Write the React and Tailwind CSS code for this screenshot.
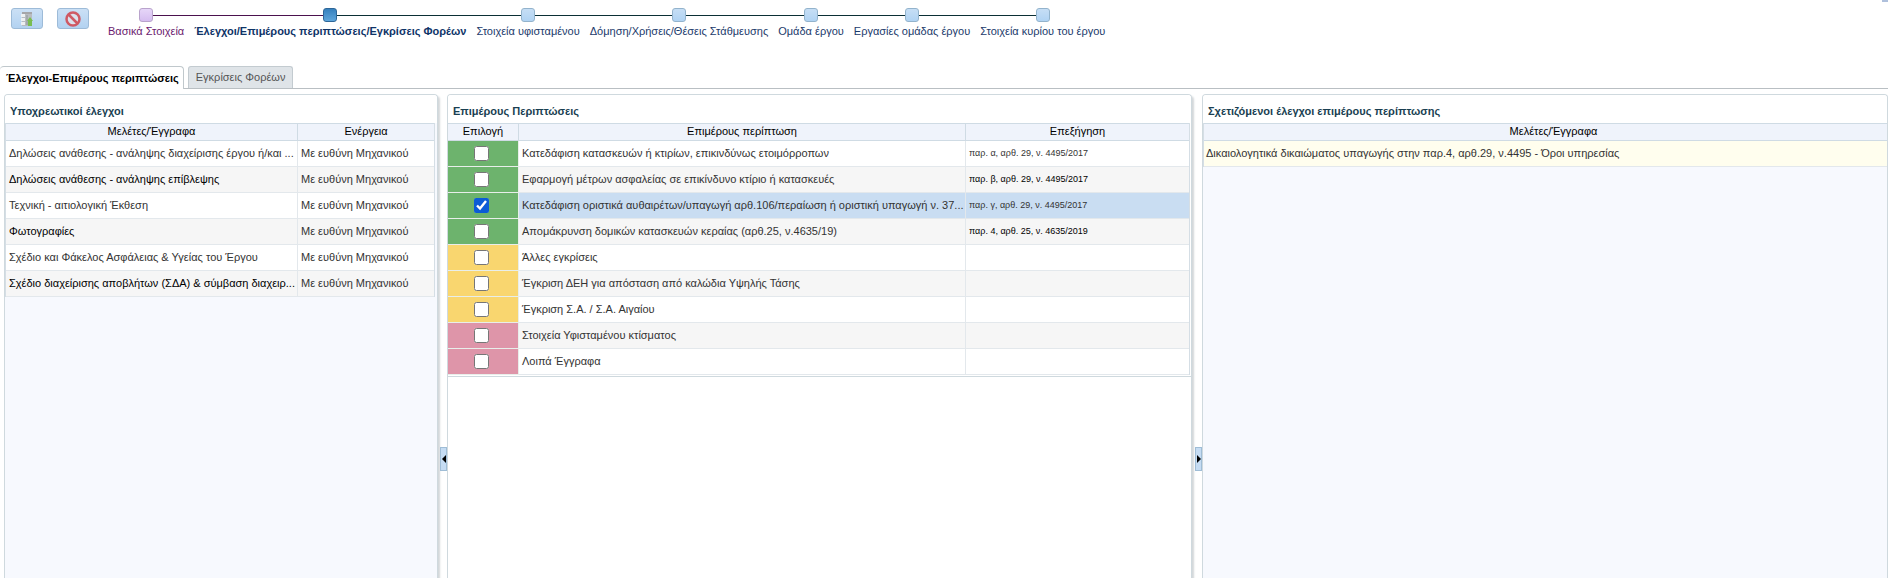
import { useState } from 'react';
import clsx from 'clsx';

const stops = [
  { label: 'Βασικά Στοιχεία', state: 'visited' },
  { label: 'Έλεγχοι/Επιμέρους περιπτώσεις/Εγκρίσεις Φορέων', state: 'current' },
  { label: 'Στοιχεία υφισταμένου', state: 'next' },
  { label: 'Δόμηση/Χρήσεις/Θέσεις Στάθμευσης', state: 'next' },
  { label: 'Ομάδα έργου', state: 'next' },
  { label: 'Εργασίες ομάδας έργου', state: 'next' },
  { label: 'Στοιχεία κυρίου του έργου', state: 'next' },
];

const requiredChecks = [
  'Δηλώσεις ανάθεσης - ανάληψης διαχείρισης έργου ή/και ...',
  'Δηλώσεις ανάθεσης - ανάληψης επίβλεψης',
  'Τεχνική - αιτιολογική Έκθεση',
  'Φωτογραφίες',
  'Σχέδιο και Φάκελος Ασφάλειας & Υγείας του Έργου',
  'Σχέδιο διαχείρισης αποβλήτων (ΣΔΑ) & σύμβαση διαχειρ...',
];

const initialCases = [
  { name: 'Κατεδάφιση κατασκευών ή κτιρίων, επικινδύνως ετοιμόρροπων', note: 'παρ. α, αρθ. 29, ν. 4495/2017', color: 'green' },
  { name: 'Εφαρμογή μέτρων ασφαλείας σε επικίνδυνο κτίριο ή κατασκευές', note: 'παρ. β, αρθ. 29, ν. 4495/2017', color: 'green' },
  { name: 'Κατεδάφιση οριστικά αυθαιρέτων/υπαγωγή αρθ.106/περαίωση ή οριστική υπαγωγή ν. 37...', note: 'παρ. γ, αρθ. 29, ν. 4495/2017', color: 'green', checked: true },
  { name: 'Απομάκρυνση δομικών κατασκευών κεραίας (αρθ.25, ν.4635/19)', note: 'παρ. 4, αρθ. 25, ν. 4635/2019', color: 'green' },
  { name: 'Άλλες εγκρίσεις', note: '', color: 'yellow' },
  { name: 'Έγκριση ΔΕΗ για απόσταση από καλώδια Υψηλής Τάσης', note: '', color: 'yellow' },
  { name: 'Έγκριση Σ.Α. / Σ.Α. Αιγαίου', note: '', color: 'yellow' },
  { name: 'Στοιχεία Υφισταμένου κτίσματος', note: '', color: 'pink' },
  { name: 'Λοιπά Έγγραφα', note: '', color: 'pink' },
];

const cellColors = {
  green: 'bg-[#6db36d]',
  yellow: 'bg-[#f9d66f]',
  pink: 'bg-[#de95a9]',
};

function ToolButton({ label, children }) {
  return (
    <button
      aria-label={label}
      className="flex h-[21px] w-8 items-center justify-center rounded-[3px] border border-[#9dbbd8] bg-gradient-to-b from-[#cbe0f5] to-[#b2d2f1]"
    >
      {children}
    </button>
  );
}

function Train() {
  return (
    <nav className="flex pt-2">
      {stops.map(({ label, state }, i) => (
        <a key={label} href="#" className="flex flex-col items-center">
          <span className="flex w-full items-start">
            <span
              className={clsx(
                'mt-[7px] h-px flex-1',
                i === 0 ? 'bg-transparent' : i === 1 ? 'bg-[#4b124e]' : 'bg-[#0b2f35]'
              )}
            />
            <span
              className={clsx(
                'size-[14px] rounded-[3px] border',
                state === 'visited' && 'border-[#b9a3cc] bg-gradient-to-b from-[#e6d6f8] to-[#d5bdf0]',
                state === 'current' && 'border-[#2d6698] bg-gradient-to-b from-[#3580bd] to-[#5ea6dc]',
                state === 'next' && 'border-[#93b3cc] bg-gradient-to-b from-[#c6def5] to-[#b0d3f3]'
              )}
            />
            <span
              className={clsx(
                'mt-[7px] h-px flex-1',
                i === stops.length - 1 ? 'bg-transparent' : i === 0 ? 'bg-[#4b124e]' : 'bg-[#0b2f35]'
              )}
            />
          </span>
          <span
            className={clsx(
              'px-[5px] pt-px leading-4 whitespace-nowrap',
              state === 'visited' && 'text-[#6b1a6e]',
              state === 'current' && 'font-bold text-[#0f3468]',
              state === 'next' && 'text-[#1b3a6b]'
            )}
          >
            {label}
          </span>
        </a>
      ))}
    </nav>
  );
}

function Panel({ title, tinted, children }) {
  return (
    <section
      className={clsx(
        'min-w-0 overflow-hidden rounded-t-[4px] border border-b-0 border-[#cfd9de] shadow-[2px_2px_2px_#d3d7da]',
        tinted ? 'bg-[#f7f9fe]' : 'bg-white'
      )}
    >
      <h2 className="h-7 bg-white px-[5px] pt-2 font-bold leading-4 text-[#1a3f52]">{title}</h2>
      {children}
    </section>
  );
}

function Head({ children, last }) {
  return (
    <th
      scope="col"
      className={clsx(
        'h-[18px] border-y border-[#cfdbe4] bg-[#eff3fb] p-0 pb-[2px] text-center font-normal leading-[14px] text-black',
        !last && 'border-r'
      )}
    >
      {children}
    </th>
  );
}

function Splitter({ direction }) {
  return (
    <div className="flex flex-col items-end pt-[353px]">
      <button
        aria-label={direction === 'left' ? 'Σύμπτυξη' : 'Ανάπτυξη'}
        className="flex h-6 w-[7px] items-center justify-center border border-[#9fbdd6] bg-[#c5dcf3]"
      >
        <svg viewBox="0 0 4 8" className="h-2 w-1 shrink-0">
          <path d={direction === 'left' ? 'M4 0v8L0 4z' : 'M0 0v8l4-4z'} fill="#000" />
        </svg>
      </button>
    </div>
  );
}

export default function App() {
  const [cases, setCases] = useState(initialCases);

  const toggle = (index) => {
    setCases(cases.map((c, i) => (i === index ? { ...c, checked: !c.checked } : c)));
  };

  return (
    <div className="flex h-screen flex-col overflow-hidden bg-white font-['Liberation_Sans',Arial,sans-serif] text-[11px] text-[#333]">
      {/* Toolbar and steps */}
      <header className="flex h-[66px] shrink-0 items-start pl-[11px]">
        <div className="flex gap-[14px] pt-2">
          <ToolButton label="Αποθήκευση">
            <svg viewBox="0 0 16 16" className="size-4">
              <path d="M3 1h10v14H3z" fill="#b9bcc0" />
              <path d="M3 1h10v2H3z" fill="#a5a5a8" />
              <path d="M2 3h4v3H2zM2 7h4v3H2zM2 11h4v3H2z" fill="#edf0f2" />
              <path d="M7 4h2v10H7z" fill="#a4a9ae" />
              <path d="M11 6l3 4h-1v5H9v-5H8z" fill="#79bd50" />
            </svg>
          </ToolButton>
          <ToolButton label="Ακύρωση">
            <svg viewBox="0 0 16 16" className="size-4" fill="none" stroke="#cf5964" strokeWidth="2.5">
              <circle cx="8" cy="8" r="6.5" fill="#dce1ed" />
              <path d="M3.5 3.5l9 9" />
            </svg>
          </ToolButton>
        </div>
        <div className="pl-[14px]">
          <Train />
        </div>
        <div className="ml-auto h-[2px] w-[6px] bg-[#afc0dc]" />
      </header>

      {/* Tabs */}
      <div role="tablist" className="flex h-[23px] shrink-0 gap-1 border-b border-[#b9bfc3]">
        <button
          role="tab"
          aria-selected="true"
          className="-mb-px rounded-t-[4px] border border-b-0 border-l-0 border-[#c0c8cc] bg-white pr-1 pl-[6px] font-bold text-black"
        >
          Έλεγχοι-Επιμέρους περιπτώσεις
        </button>
        <button
          role="tab"
          aria-selected="false"
          className="rounded-t-[3px] border border-b-0 border-[#c3cbd0] bg-[#dfe4e8] px-[7px] text-[#555]"
        >
          Εγκρίσεις Φορέων
        </button>
      </div>

      <main className="grid min-h-0 flex-1 grid-cols-[434fr_9px_745fr_10px_686fr] pt-[5px] pl-1">
        <Panel title="Υποχρεωτικοί έλεγχοι" tinted>
          <div className="pr-[2px]">
            <table className="w-full table-fixed border-separate border-spacing-0 border-r border-l border-[#d5dee5]">
              <colgroup>
                <col />
                <col className="w-[136px]" />
              </colgroup>
              <thead>
                <tr>
                  <Head>Μελέτες/Έγγραφα</Head>
                  <Head last>Ενέργεια</Head>
                </tr>
              </thead>
              <tbody>
                {requiredChecks.map((name, i) => (
                  <tr key={name} className={i % 2 ? 'bg-[#f6f6f6]' : 'bg-white'}>
                    <td
                      className={clsx(
                        'h-[26px] overflow-hidden border-r border-b border-[#e3e8ec] py-0 pl-[3px] whitespace-nowrap',
                        i % 2 && 'text-black'
                      )}
                    >
                      {name}
                    </td>
                    <td className="h-[26px] border-b border-[#e3e8ec] py-0 pl-[3px] whitespace-nowrap">
                      Με ευθύνη Μηχανικού
                    </td>
                  </tr>
                ))}
              </tbody>
            </table>
          </div>
        </Panel>

        <Splitter direction="left" />

        <Panel title="Επιμέρους Περιπτώσεις">
          <div className="border-b border-[#cfd9de] pr-px pb-px">
            <table className="w-full table-fixed border-separate border-spacing-0 border-r border-[#d5dee5]">
              <colgroup>
                <col className="w-[71px]" />
                <col />
                <col className="w-[223px]" />
              </colgroup>
              <thead>
                <tr>
                  <Head>Επιλογή</Head>
                  <Head>Επιμέρους περίπτωση</Head>
                  <Head last>Επεξήγηση</Head>
                </tr>
              </thead>
              <tbody>
                {cases.map((c, i) => (
                  <tr key={c.name} className={c.checked ? 'bg-[#c9ddf2]' : i % 2 ? 'bg-[#f6f6f6]' : 'bg-white'}>
                    <td className={clsx('h-[26px] border-r border-b border-[#e8eeea] p-0 pr-1', cellColors[c.color])}>
                      <input
                        type="checkbox"
                        aria-label={c.name}
                        checked={!!c.checked}
                        onChange={() => toggle(i)}
                        className="mx-auto block size-[15px] accent-[#0b5cd6]"
                      />
                    </td>
                    <td className="h-[26px] overflow-hidden border-r border-b border-[#e3e8ec] py-0 pl-[3px] whitespace-nowrap">
                      {c.name}
                    </td>
                    <td
                      className={clsx(
                        'h-[26px] border-b border-[#e3e8ec] py-0 pl-[3px] text-[9px] whitespace-nowrap',
                        i % 2 && 'text-black'
                      )}
                    >
                      {c.note}
                    </td>
                  </tr>
                ))}
              </tbody>
            </table>
          </div>
        </Panel>

        <Splitter direction="right" />

        <Panel title="Σχετιζόμενοι έλεγχοι επιμέρους περίπτωσης" tinted>
          <table className="w-[calc(100%+16px)] table-fixed border-separate border-spacing-0 border-l border-[#d5dee5]">
            <thead>
              <tr>
                <Head last>Μελέτες/Έγγραφα</Head>
              </tr>
            </thead>
            <tbody>
              <tr className="bg-[#fffeee]">
                <td className="h-[26px] border-b border-[#e3e8ec] py-0 pl-[2px] whitespace-nowrap">
                  Δικαιολογητικά δικαιώματος υπαγωγής στην παρ.4, αρθ.29, ν.4495 - Όροι υπηρεσίας
                </td>
              </tr>
            </tbody>
          </table>
        </Panel>
      </main>
    </div>
  );
}
